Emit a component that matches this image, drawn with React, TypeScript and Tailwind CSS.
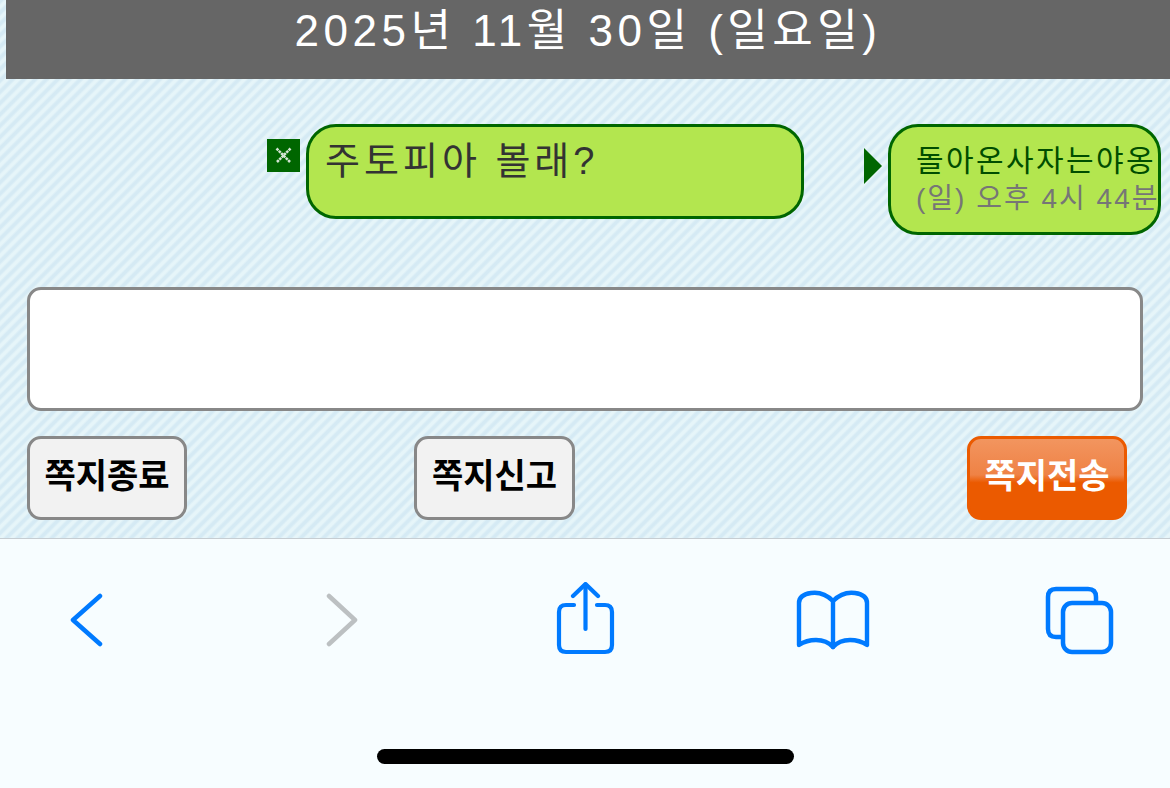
function BackIcon() {
    return (
        <svg width="34" height="60" viewBox="0 0 34 60" fill="none" stroke="#007aff" strokeWidth="4.5" strokeLinecap="round" strokeLinejoin="round">
            <path d="M31 6 L4 30 L31 54" />
        </svg>
    );
}

function ForwardIcon() {
    return (
        <svg width="34" height="60" viewBox="0 0 34 60" fill="none" stroke="#bcc0c2" strokeWidth="4.5" strokeLinecap="round" strokeLinejoin="round">
            <path d="M5 6 L31 30 L5 54" />
        </svg>
    );
}

function ShareIcon() {
    return (
        <svg width="60" height="74" viewBox="0 0 60 74" fill="none" stroke="#007aff" strokeWidth="4.2" strokeLinecap="round" strokeLinejoin="round">
            <path d="M18 23 H10 Q3 23 3 30 V63 Q3 70 10 70 H49 Q56 70 56 63 V30 Q56 23 49 23 H41" />
            <path d="M29.5 47 V3" />
            <path d="M17 14 L29.5 2 L42 14" />
        </svg>
    );
}

function BookIcon() {
    return (
        <svg width="74" height="62" viewBox="0 0 74 62" fill="none" stroke="#007aff" strokeWidth="4.4" strokeLinecap="round" strokeLinejoin="round">
            <path d="M37 11 C30 4 22 2 15 3 C8 4 3 7 3 13 V55 C12 49 28 47 37 57 C46 47 62 49 71 55 V13 C71 7 66 4 59 3 C52 2 44 4 37 11 Z" />
            <path d="M37 11 V57" />
        </svg>
    );
}

function TabsIcon() {
    return (
        <svg width="70" height="70" viewBox="0 0 70 70" fill="none" stroke="#007aff" strokeWidth="4.5" strokeLinejoin="round">
            <path d="M18 51 H11 Q3 51 3 43 V11 Q3 3 11 3 H43 Q51 3 51 11 V17" />
            <rect x="18" y="17" width="48" height="49" rx="9" />
        </svg>
    );
}

function CloseIcon() {
    return (
        <div className="w-[33px] h-[33px] bg-[#006600] flex items-center justify-center">
            <svg width="19" height="19" viewBox="0 0 19 19" stroke="#d4e4d4" strokeWidth="2.6" strokeDasharray="2.6 0.7">
                <path d="M2.5 2.5 L16.5 16.5 M16.5 2.5 L2.5 16.5" />
            </svg>
        </div>
    );
}

export default function App() {
    return (
        <div className="w-[1170px] h-[788px] overflow-hidden flex flex-col font-['Liberation_Sans','Noto_Sans_CJK_KR',sans-serif]">
            <div className="h-[538px] shrink-0 bg-[repeating-linear-gradient(135deg,#d5eaf4_0px,#d5eaf4_2px,#e6f5f9_4px,#e6f5f9_6px,#d5eaf4_8px)]">
                <div className="ml-[6px] h-[79px] bg-[#666666] flex items-center justify-center text-white text-[44px] leading-none tracking-[4.5px] pb-[17px]">
                    2025년 11월 30일 (일요일)
                </div>

                <div className="flex items-start mt-[45px] pl-[267px]">
                    <div className="mt-[15px] mr-[6px]">
                        <CloseIcon />
                    </div>
                    <div className="w-[498px] h-[95px] bg-[#b3e64f] border-[3px] border-[#006600] rounded-[30px] pl-[16px] pt-[9px] text-[38px] leading-[50px] tracking-[4px] text-[#333333]">
                        주토피아 볼래?
                    </div>
                    <div className="ml-[60px] mt-[24px] w-0 h-0 border-y-[18px] border-y-transparent border-l-[18px] border-l-[#006600]" />
                    <div className="ml-[6px] w-[273px] h-[111px] bg-[#b3e64f] border-[3px] border-[#006600] rounded-[30px] pl-[25px] pt-[14px] whitespace-nowrap">
                        <div className="text-[30px] leading-[40px] tracking-[2.4px] text-[#004d00]">돌아온사자는야옹</div>
                        <div className="text-[28px] leading-[36px] tracking-[2px] text-[#767676]">(일) 오후 4시 44분</div>
                    </div>
                </div>

                <div className="mt-[52px] mx-[27px] h-[124px] bg-white border-[3px] border-[#888888] rounded-[14px]" />

                <div className="mt-[25px] ml-[27px] flex">
                    <button className="w-[160px] h-[84px] bg-[#f2f2f2] border-[3px] border-[#888888] rounded-[14px] text-[34px] font-bold text-black pb-[4px]">
                        쪽지종료
                    </button>
                    <button className="ml-[227px] w-[161px] h-[84px] bg-[#f2f2f2] border-[3px] border-[#888888] rounded-[14px] text-[34px] font-bold text-black pb-[4px]">
                        쪽지신고
                    </button>
                    <button className="ml-[392px] w-[160px] h-[84px] bg-[linear-gradient(180deg,#f2955f_0%,#ef8245_46%,#eb5a00_56%,#eb5a00_100%)] border-[3px] border-[#eb5a00] rounded-[14px] text-[34px] font-bold text-white pb-[4px]">
                        쪽지전송
                    </button>
                </div>
            </div>

            <div className="flex-1 bg-[#f7fdff] border-t border-[#c6cdd2] flex flex-col">
                <div className="h-[210px] pl-[69px] pt-[43px] flex items-start">
                    <div className="mt-[8px]"><BackIcon /></div>
                    <div className="mt-[8px] ml-[221px]"><ForwardIcon /></div>
                    <div className="ml-[198px]"><ShareIcon /></div>
                    <div className="mt-[8px] ml-[180px]"><BookIcon /></div>
                    <div className="mt-[4px] ml-[175px]"><TabsIcon /></div>
                </div>
                <div className="flex justify-center">
                    <div className="w-[417px] h-[15px] bg-black rounded-full" />
                </div>
            </div>
        </div>
    );
}
